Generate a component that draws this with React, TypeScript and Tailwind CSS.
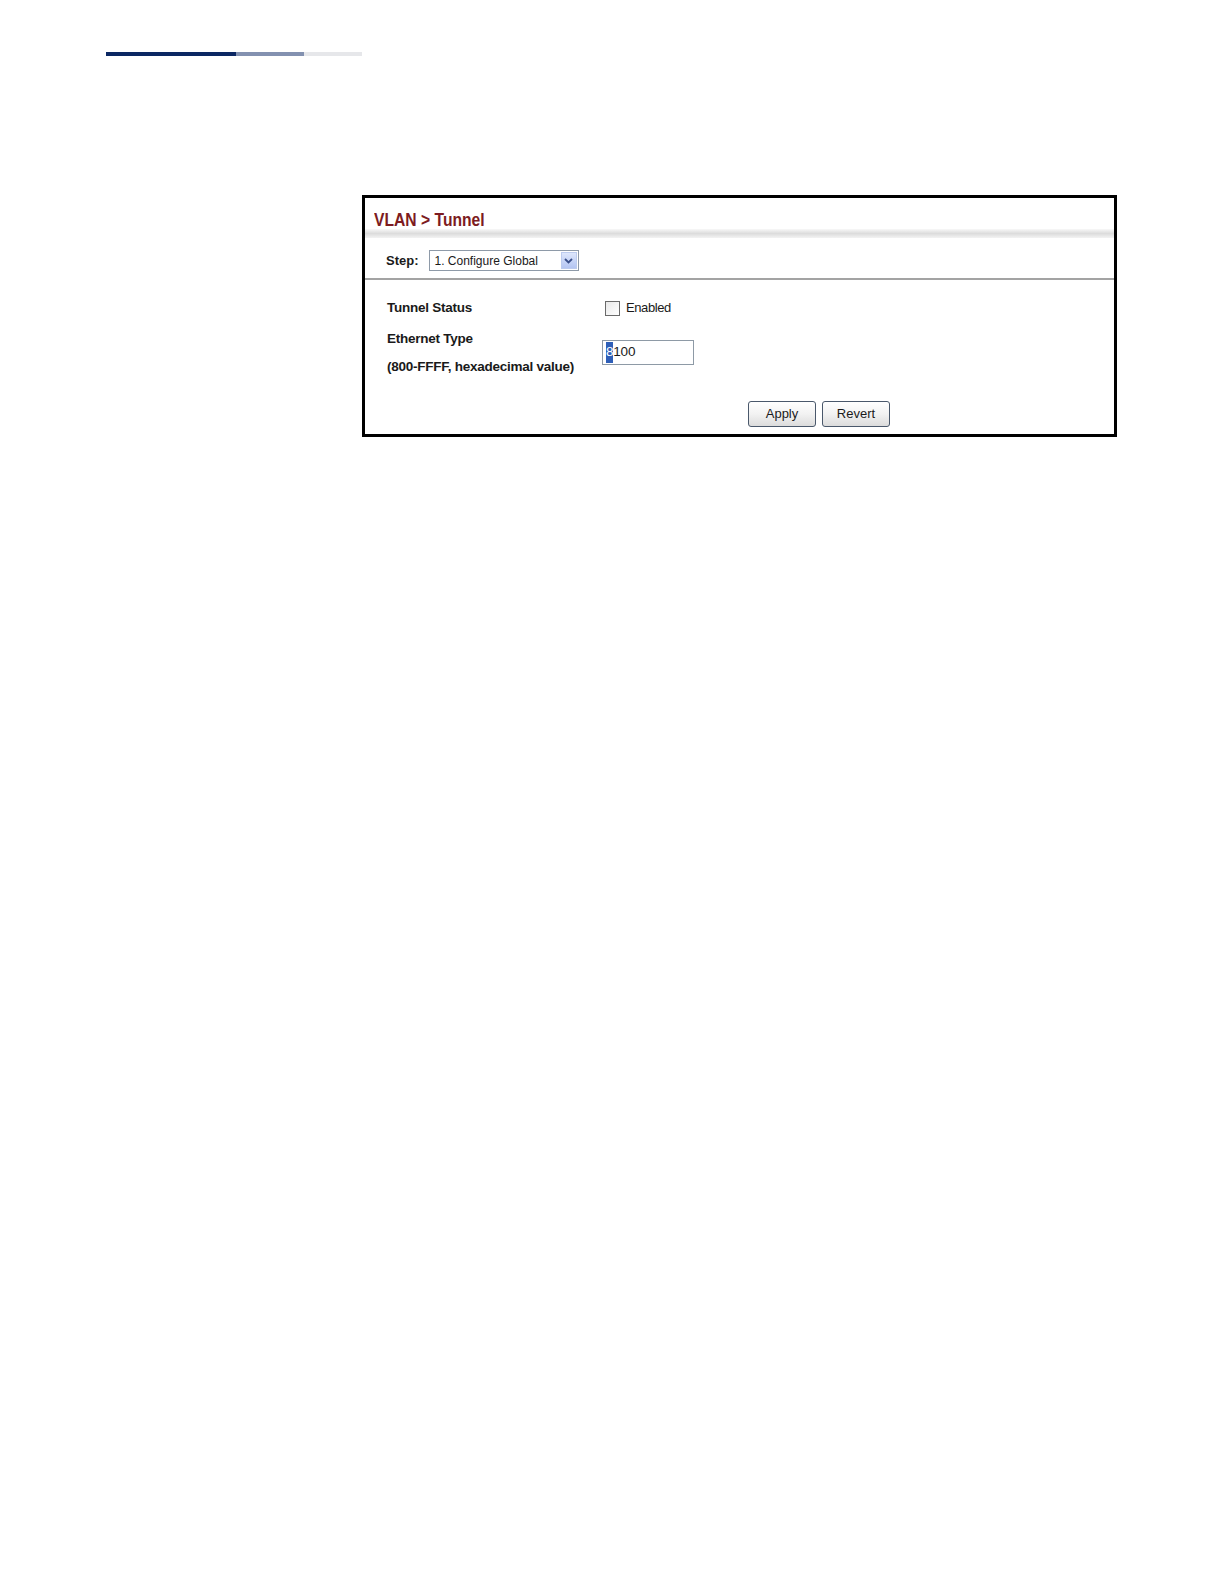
export default function App() {
  return (
    <div className="relative min-h-screen w-full bg-white font-['Liberation_Sans',Arial,sans-serif] text-[#1a1a1a]">
      {/* page header rule */}
      <div className="flex pl-[106px] pt-[52px]">
        <div className="h-[4px] w-[130px] bg-[#0b2763]" />
        <div className="h-[4px] w-[68px] bg-[#8391b0]" />
        <div className="h-[4px] w-[58px] bg-[#e6e7ea]" />
      </div>

      {/* screenshot panel */}
      <div className="ml-[362px] mt-[139px] flex h-[242px] w-[755px] flex-col border-[3px] border-black bg-white">
        <div className="h-[31px] pl-[9px] pt-[11px]">
          <span className="inline-block origin-left scale-x-[0.87] whitespace-nowrap text-[18px] font-bold leading-5 text-[#7d1b21]">
            VLAN &gt; Tunnel
          </span>
        </div>
        <div className="h-[9px] bg-gradient-to-b from-[#f8f8f8] via-[#dcdcdc] to-[#f3f3f3]" />

        <div className="flex items-center pb-[7px] pl-[21px] pt-[12px]">
          <span className="text-[13px] font-bold leading-4">Step:</span>
          <div className="ml-[10px] flex h-[21px] w-[150px] items-center border border-[#8e9aa8] bg-white">
            <span className="flex-1 pl-[5px] text-[12px] leading-4">1. Configure Global</span>
            <div className="mr-[1px] flex h-[17px] w-[16px] items-center justify-center border border-[#bccbee] bg-gradient-to-b from-[#dde6fb] to-[#b4c5f2]">
              <svg width="9" height="6" viewBox="0 0 9 6">
                <path d="M1 1 L4.5 4.5 L8 1" fill="none" stroke="#3a4f8a" strokeWidth="1.8" />
              </svg>
            </div>
          </div>
        </div>
        <div className="h-[2px] bg-[#a3a3a3]" />

        <div className="flex pl-[22px] pt-[20px]">
          <div className="w-[215px] text-[13.5px] font-bold leading-4 tracking-[-0.25px]">Tunnel Status</div>
          <div className="flex items-start">
            <div className="ml-[3px] mt-[1px] h-[15px] w-[15px] border border-[#6a6a6a] bg-gradient-to-br from-[#e8e8e8] to-white" />
            <span className="ml-[6px] text-[13px] leading-4 tracking-[-0.4px]">Enabled</span>
          </div>
        </div>

        <div className="flex pl-[22px] pt-[15px]">
          <div className="flex w-[215px] flex-col gap-[12px] text-[13.5px] font-bold leading-4 tracking-[-0.25px]">
            <span>Ethernet Type</span>
            <span className="whitespace-nowrap">(800-FFFF, hexadecimal value)</span>
          </div>
          <div className="pt-[9px]">
            <div className="flex h-[25px] w-[92px] items-center border border-[#8e9aa6] bg-white pl-[3px] text-[13.5px] tracking-[-0.2px]">
              <span className="bg-[#2f5fb8] text-white">8</span>
              <span>100</span>
            </div>
          </div>
        </div>

        <div className="flex gap-[6px] pl-[383px] pt-[26px]">
          <button className="h-[26px] w-[68px] rounded-[3px] border border-[#4a586b] bg-gradient-to-b from-white via-[#f2f2f2] to-[#dcdcdc] text-[13px] text-[#1a1a1a]">
            Apply
          </button>
          <button className="h-[26px] w-[68px] rounded-[3px] border border-[#4a586b] bg-gradient-to-b from-white via-[#f2f2f2] to-[#dcdcdc] text-[13px] text-[#1a1a1a]">
            Revert
          </button>
        </div>
      </div>
    </div>
  );
}
